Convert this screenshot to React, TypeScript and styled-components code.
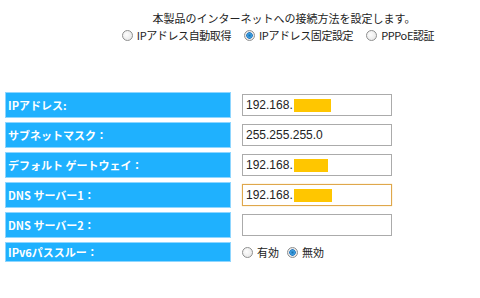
import styled, { createGlobalStyle } from "styled-components";

const GlobalStyle = createGlobalStyle`
  body {
    margin: 0;
    background: #fff;
    font-family: "Noto Sans CJK JP", "Liberation Sans", sans-serif;
  }
`;

const rows = [
    {label: "IPアドレス:", value: "192.168.", mask: 37},
    {label: "サブネットマスク：", value: "255.255.255.0"},
    {label: "デフォルト ゲートウェイ：", value: "192.168.", mask: 34},
    {label: "DNS サーバー1：", value: "192.168.", mask: 38, focused: true},
    {label: "DNS サーバー2：", value: ""},
];

export default function App() {
    return (
        <>
            <GlobalStyle/>
            <Page>
                <Header>
                    <Lead>本製品のインターネットへの接続方法を設定します。</Lead>
                    <ModeRow>
                        <Choice><Radio/>IPアドレス自動取得</Choice>
                        <Choice><Radio $checked/>IPアドレス固定設定</Choice>
                        <Choice><Radio/>PPPoE認証</Choice>
                    </ModeRow>
                </Header>
                <Form>
                    {rows.map((row) => (
                        <Row key={row.label}>
                            <Label>{row.label}</Label>
                            <Cell>
                                <Field $focused={row.focused}>
                                    {row.value}
                                    {row.mask && <Mask $width={row.mask}/>}
                                </Field>
                            </Cell>
                        </Row>
                    ))}
                    <Row $short>
                        <Label>IPv6パススルー：</Label>
                        <Cell>
                            <Choice><Radio/>有効</Choice>
                            <Choice><Radio $checked/>無効</Choice>
                        </Cell>
                    </Row>
                </Form>
            </Page>
        </>
    );
}

const Page = styled.div`
  width: 480px;
  height: 298px;
  padding-top: 10px;
  box-sizing: border-box;
`;

const Header = styled.div`
  padding-left: 88px;
  text-align: center;
  color: #222;
  font-size: 11px;
`;

const Lead = styled.div`
  line-height: 17px;
`;

const ModeRow = styled.div`
  display: flex;
  justify-content: center;
  gap: 13px;
  margin-left: -12px;
  letter-spacing: -0.4px;
  line-height: 17px;
`;

const Choice = styled.label`
  display: inline-flex;
  align-items: center;
  gap: 4px;
  color: #222;
  font-size: 11px;
`;

const Radio = styled.span<{ $checked?: boolean }>`
  display: inline-block;
  width: 11px;
  height: 11px;
  border-radius: 50%;
  box-sizing: border-box;
  border: 1px solid #8e8f8f;
  background: ${(p) => p.$checked
    ? "radial-gradient(circle, #1a6fb0 0, #3da0e0 2px, #2a7ac0 3px, #e8e8e8 3.5px, #f6f6f6 100%)"
    : "radial-gradient(circle at 40% 40%, #fdfdfd 0, #e2e2e2 100%)"};
`;

const Form = styled.div`
  margin-top: 48px;
  margin-left: 5px;
  display: flex;
  flex-direction: column;
  gap: 4px;
`;

const Row = styled.div<{ $short?: boolean }>`
  display: grid;
  grid-template-columns: 226px 1fr;
  column-gap: 4px;
  height: ${(p) => (p.$short ? "20px" : "26px")};
`;

const Label = styled.div`
  display: flex;
  align-items: center;
  box-sizing: border-box;
  padding-left: 2px;
  background: #1fb1fe;
  border: 1px solid #8fd6ff;
  color: #fff;
  font-size: 11px;
  font-weight: bold;
  white-space: pre;
`;

const Cell = styled.div`
  display: flex;
  align-items: center;
  gap: 8px;
  padding-left: 7px;
`;

const Field = styled.div<{ $focused?: boolean }>`
  display: flex;
  align-items: center;
  box-sizing: border-box;
  width: 150px;
  height: 22px;
  padding-left: 3px;
  border: 1px solid ${(p) => (p.$focused ? "#dfa74c" : "#ababab")};
  box-shadow: ${(p) => (p.$focused ? "0 0 1px #f3c77a" : "none")};
  font-family: "Liberation Sans", Arial, sans-serif;
  font-size: 12px;
  color: #222;
`;

const Mask = styled.span<{ $width: number }>`
  display: inline-block;
  width: ${(p) => p.$width}px;
  height: 13px;
  margin-left: 1px;
  background: #ffc600;
`;
